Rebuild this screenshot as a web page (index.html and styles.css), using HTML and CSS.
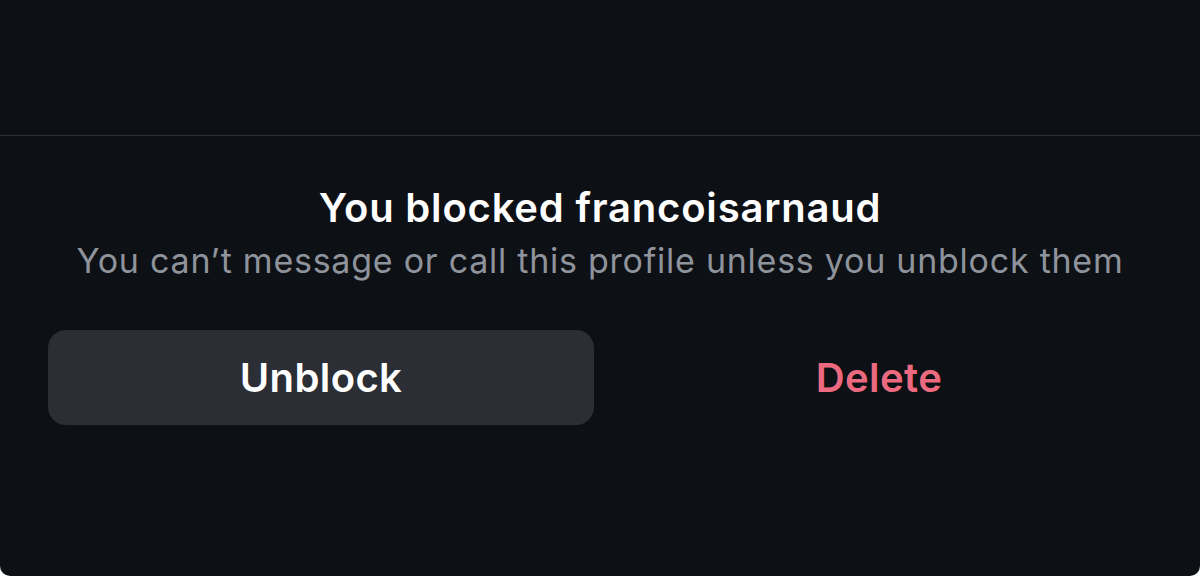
FILE: index.html
```html
<!DOCTYPE html>
<html>
<head>
<meta charset="utf-8">
<link rel="stylesheet" href="styles.css">
</head>
<body>
<div class="card">
  <div class="header"></div>
  <div class="content">
    <h1 class="title">You blocked francoisarnaud</h1>
    <p class="subtitle">You can’t message or call this profile unless you unblock them</p>
    <div class="actions">
      <button class="btn btn-unblock">Unblock</button>
      <button class="btn btn-delete">Delete</button>
    </div>
  </div>
</div>
</body>
</html>
```
FILE: styles.css
```css
html, body {
  margin: 0;
  padding: 0;
  background: #ffffff;
}
.card {
  width: 1200px;
  height: 576px;
  background: #0d1015;
  border-radius: 0 0 10px 10px;
  overflow: hidden;
  font-family: Inter, "Noto Sans", sans-serif;
}
.header {
  height: 135px;
  border-bottom: 1px solid #2b2e34;
}
.content {
  display: flex;
  flex-direction: column;
  align-items: center;
  padding: 49px 48px 0;
}
.title {
  margin: 0;
  font-size: 40px;
  font-weight: 600;
  color: #ffffff;
  line-height: 46px;
  letter-spacing: 0.8px;
}
.subtitle {
  margin: 10px 0 0;
  font-size: 34px;
  font-weight: 400;
  color: #8f939b;
  line-height: 40px;
  letter-spacing: 0.75px;
  white-space: nowrap;
}
.actions {
  display: grid;
  grid-template-columns: 1fr 1fr;
  gap: 12px;
  width: 100%;
  margin-top: 49px;
}
.btn {
  height: 95px;
  border: none;
  border-radius: 18px;
  font-family: inherit;
  font-size: 40px;
  font-weight: 600;
  letter-spacing: 0.4px;
  padding: 0;
}
.btn-unblock {
  background: #2b2e35;
  color: #ffffff;
}
.btn-delete {
  background: transparent;
  color: #ec6a7f;
}
```
